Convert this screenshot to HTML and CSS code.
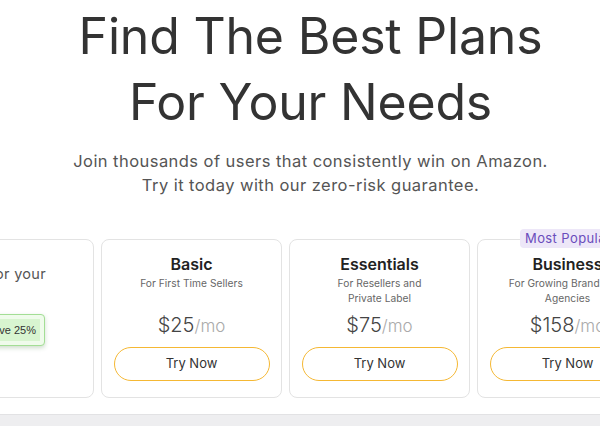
FILE: index.html
```html
<!DOCTYPE html>
<html lang="en">
<head>
<meta charset="utf-8">
<title>Pricing</title>
<link rel="stylesheet" href="styles.css">
</head>
<body>
<section class="pricing">
  <header class="intro">
    <h1 class="title">Find The Best Plans<br>For Your Needs</h1>
    <p class="lead">Join thousands of users that consistently win on Amazon.<br>Try it today with our zero-risk guarantee.</p>
  </header>
  <div class="plans">
    <div class="card card-toggle">
      <p class="toggle-text">Choose the plan for your</p>
      <div class="save-box"><span class="save-inner">Save 25%</span></div>
    </div>
    <div class="card">
      <h2 class="plan-name">Basic</h2>
      <p class="plan-desc">For First Time Sellers</p>
      <p class="price"><span class="amount">$25</span><span class="per">/mo</span></p>
      <button class="try">Try Now</button>
    </div>
    <div class="card">
      <h2 class="plan-name">Essentials</h2>
      <p class="plan-desc">For Resellers and<br>Private Label</p>
      <p class="price"><span class="amount">$75</span><span class="per">/mo</span></p>
      <button class="try">Try Now</button>
    </div>
    <div class="card card-popular">
      <span class="badge">Most Popular</span>
      <h2 class="plan-name">Business</h2>
      <p class="plan-desc">For Growing Brands and<br>Agencies</p>
      <p class="price"><span class="amount">$158</span><span class="per">/mo</span></p>
      <button class="try">Try Now</button>
    </div>
  </div>
</section>
<div class="below"></div>
</body>
</html>
```
FILE: styles.css
```css
html, body {
  margin: 0;
  padding: 0;
  background: #eeeef0;
  overflow: hidden;
  width: 600px;
  height: 426px;
}
body {
  font-family: "Inter", "Noto Sans", sans-serif;
  color: #333;
}
.pricing {
  background: #fff;
  border-bottom: 1px solid #e2e2e4;
  padding: 3px 0 16px;
}
.intro {
  padding-left: 21px;
  text-align: center;
}
.title {
  margin: 0;
  font-size: 50px;
  line-height: 66px;
  font-weight: 400;
  color: #333;
  letter-spacing: -0.2px;
}
.lead {
  margin: 14px 0 0;
  font-size: 16.5px;
  line-height: 24px;
  letter-spacing: 0.45px;
  color: #555;
}
.plans {
  display: flex;
  gap: 7px;
  margin-top: 42px;
  margin-left: -87px;
  align-items: stretch;
}
.card {
  position: relative;
  flex: 0 0 181px;
  min-width: 0;
  box-sizing: border-box;
  height: 159px;
  border: 1px solid #e3e3e3;
  border-radius: 8px;
  padding: 12px 12px 0;
  display: flex;
  flex-direction: column;
  align-items: center;
  text-align: center;
  background: #fff;
}
.card-toggle {
  align-items: flex-end;
  padding: 24px 47px 0 0;
}
.toggle-text {
  margin: 0;
  white-space: nowrap;
  font-size: 14.5px;
  line-height: 20px;
  letter-spacing: 0.3px;
  color: #555;
}
.save-box {
  margin: 30px 1px 0 0;
  border: 1.5px solid #a3de95;
  border-radius: 4px;
  background: #effbeb;
  padding: 4px;
  box-shadow: 0 2px 4px rgba(60, 120, 50, 0.25);
}
.save-inner {
  display: block;
  background: #d8f5d0;
  padding: 4px 4px 4px 6px;
  font-family: "Liberation Sans", Arial, sans-serif;
  font-size: 11px;
  line-height: 14px;
  color: #333;
  white-space: nowrap;
}
.plan-name {
  margin: 0;
  font-size: 16px;
  line-height: 24px;
  font-weight: 600;
  color: #222;
}
.plan-desc {
  margin: 0;
  min-height: 30px;
  font-size: 10.2px;
  line-height: 15px;
  letter-spacing: 0.05px;
  color: #666;
}
.price {
  margin: 5px 0 0;
  line-height: 28px;
  white-space: nowrap;
}
.amount {
  font-size: 20px;
  font-weight: 300;
  color: #444;
}
.per {
  font-size: 17px;
  font-weight: 300;
  color: #aaa;
}
.try {
  margin-top: 7px;
  width: 156px;
  height: 34px;
  padding: 0 0 2px;
  border: 1px solid #f5b834;
  border-radius: 18px;
  background: #fff;
  font-family: inherit;
  font-size: 13px;
  color: #333;
  cursor: pointer;
}
.badge {
  position: absolute;
  top: -11px;
  left: 42px;
  height: 19px;
  line-height: 19px;
  padding: 0 5px;
  border-radius: 4px;
  background: #ede7f8;
  color: #6a4cbc;
  font-size: 13px;
  letter-spacing: 0.4px;
  white-space: nowrap;
}
.below {
  height: 20px;
}
```
